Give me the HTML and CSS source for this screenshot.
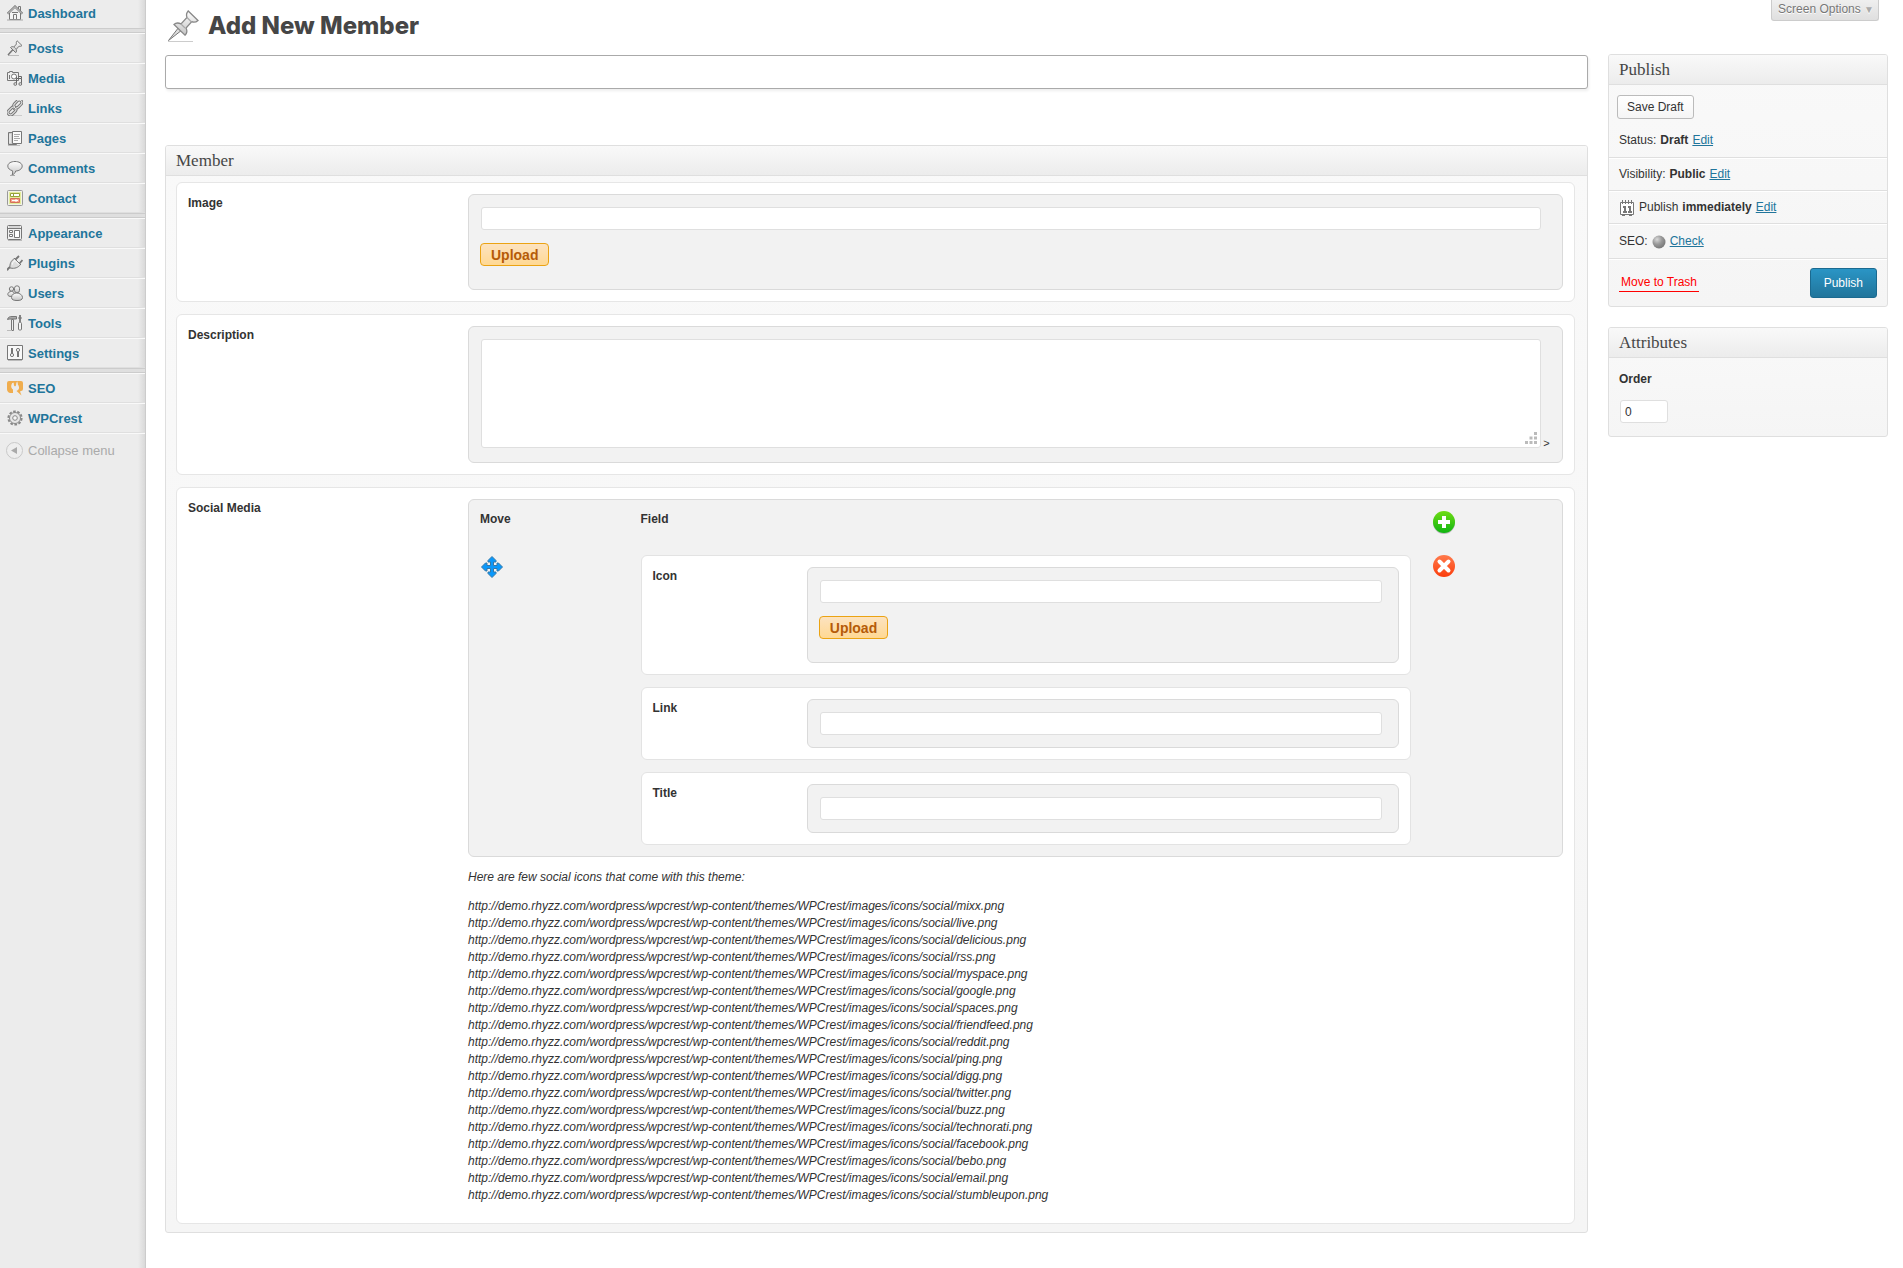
FILE: index.html
```html
<!DOCTYPE html>
<html lang="en">
<head>
  <meta charset="UTF-8" />
  <meta name="viewport" content="width=device-width, initial-scale=1.0" />
  <title>Add New Member</title>
  <link rel="stylesheet" href="styles.css">
</head>
<body>
  <svg class="defs" width="0" height="0" aria-hidden="true">
    <defs>
      <linearGradient id="metal" x1="0" y1="0" x2="0" y2="1">
        <stop offset="0" stop-color="#fff" />
        <stop offset="1" stop-color="#c4c4c4" />
      </linearGradient>
      <linearGradient id="green" x1="0" y1="0" x2="0" y2="1">
        <stop offset="0" stop-color="#6fdc14" />
        <stop offset="1" stop-color="#0fb511" />
      </linearGradient>
      <linearGradient id="orange" x1="0" y1="0" x2="0" y2="1">
        <stop offset="0" stop-color="#ff7a4c" />
        <stop offset="1" stop-color="#fb3d0c" />
      </linearGradient>
      <radialGradient id="ball" cx="0.35" cy="0.3" r="0.75">
        <stop offset="0" stop-color="#d8d8d8" />
        <stop offset="0.5" stop-color="#999" />
        <stop offset="1" stop-color="#757575" />
      </radialGradient>
    </defs>
  </svg>

  <div class="wrap">
    <nav class="menu">
      <ul>
        <li class="first"><a href="#">
          <svg width="16" height="16" viewBox="0 0 16 16" fill="none" stroke="#777"><path d="M2.500 8v6.500h11V8" fill="#f4f4f4" /><path d="M.7 8.700 8 1.500l7.300 7.200" stroke-width="2.200" /><path d="M.9 8.600 8 1.600l7.100 7" stroke="#eee" stroke-width=".8" /><path d="M11.500 4V1.500h2V6" /><path d="M6.500 14.500v-5h3v5M5 7.500h6" /><path d="M0 15h16" stroke="#aaa" /></svg>
          Dashboard</a></li>
        <li class="separator"></li>
        <li><a href="#">
          <svg width="16" height="16" viewBox="0 0 16 16"><path d="M1 15.500h11" stroke="#bbb" /><path d="M1 15 6 9.500" stroke="#777" stroke-width="1.500" /><path d="M3.500 7.500c1-1 2-1 3.300-.5l2.700-3c-.4-1-.3-2.200.6-3.200L15 5.500c-1 .9-2.100 1-3 .7L9.300 9.300c.5 1.200.3 2.600-.6 3.400z" fill="url(#metal)" stroke="#777" /><path d="M7 7l2 2" stroke="#999" /></svg>
          Posts</a></li>
        <li><a href="#">
          <svg width="16" height="16" viewBox="0 0 16 16" fill="none" stroke="#777"><path d="M.5 2.500h2v-1h3v1h6v8H.5z" fill="#eee" /><circle cx="7" cy="6.500" r="2.500" fill="#fff" /><path d="M2.500 5v4" /><path d="M9.500 14v-5.500h5V14M9.500 8.500v-2M14.500 8.500v-2h-3" stroke="#666" /><circle cx="8.300" cy="14" r="1.400" fill="#ddd" /><circle cx="13.300" cy="14" r="1.400" fill="#ddd" /></svg>
          Media</a></li>
        <li><a href="#">
          <svg width="16" height="16" viewBox="0 0 16 16" fill="none"><path d="M3 15.500h12" stroke="#ccc" /><g stroke="#777" stroke-width="3"><rect x="7.500" y="-.5" width="5" height="9" rx="2.500" transform="rotate(45 10.500 5)" /><rect x="2.500" y="6.500" width="5" height="9" rx="2.500" transform="rotate(45 5 11)" /></g><g stroke="#e8e8e8" stroke-width="1"><rect x="7.500" y="-.5" width="5" height="9" rx="2.500" transform="rotate(45 10.500 5)" /><rect x="2.500" y="6.500" width="5" height="9" rx="2.500" transform="rotate(45 5 11)" /></g><path d="M6 10l4-4" stroke="#888" /></svg>
          Links</a></li>
        <li><a href="#">
          <svg width="16" height="16" viewBox="0 0 16 16" fill="none" stroke="#777"><path d="M1.500 2.500h8v12h-8z" fill="#ccc" /><path d="M3 4v9" stroke="#fff" /><path d="M5.500 1.500h9v12h-9z" fill="#fafafa" /><path d="M7 4.500h6M7 6.500h5M7 8.500h6M7 10.500h4" stroke="#aaa" /><path d="M1 15.500h12" stroke="#bbb" /></svg>
          Pages</a></li>
        <li><a href="#">
          <svg width="16" height="16" viewBox="0 0 16 16"><path d="M8 1.500c4 0 7.200 1.800 7.200 4.600S12 11 8.700 11c-.5 2-1.900 3.500-3.700 4 .7-1.300.8-2.700.4-4.300C2.800 10 .8 8.400.8 6.100.8 3.300 4 1.500 8 1.500z" fill="url(#metal)" stroke="#777" /><path d="M3 15.500h5" stroke="#aaa" /></svg>
          Comments</a></li>
        <li><a href="#">
          <svg width="16" height="16" viewBox="0 0 16 16" fill="none"><rect x=".5" y=".5" width="15" height="15" rx="1" fill="#f2f2e6" stroke="#999" /><path d="M2 2h12v12H2z" fill="#e3ec9a" /><path d="M3.500 3.500h9v3h-9z" fill="#fff" stroke="#97a33a" /><path d="M6.500 3v4" stroke="#97a33a" /><path d="M3.500 8.500h9v4h-9z" fill="#f4a08a" stroke="#d4705a" /><path d="M5 10.500h6M9 9v3" stroke="#fff" /></svg>
          Contact</a></li>
        <li class="separator"></li>
        <li><a href="#">
          <svg width="16" height="16" viewBox="0 0 16 16" fill="none" stroke="#777"><rect x=".5" y=".5" width="14" height="14" rx="1" fill="#f0f0f0" /><path d="M1 3.500h13" /><path d="M2 2h11" stroke="#bbb" /><path d="M2.500 5.500h3v2h-3zM2.500 9.500h3v2h-3zM7.500 5.500h5v7h-5z" fill="#fff" /><path d="M1 15.500h14" stroke="#bbb" /></svg>
          Appearance</a></li>
        <li><a href="#">
          <svg width="16" height="16" viewBox="0 0 16 16" fill="none" stroke="#777"><path d="M0 15.500C1 13 2 12.500 3.500 12" stroke-width="2" /><path d="M3 12.800C2.500 9 4 5.500 7.500 3.500l6 6C11.500 12.500 7.500 14 3.500 13z" fill="#ddd" /><path d="M5.500 9.500c0-2 1-3 2.500-4l4 4" stroke="#fff" /><path d="M8.500 4.500 12 1M12.500 8.500 15.500 5" stroke-width="1.800" /><path d="M7 3l7 7" /></svg>
          Plugins</a></li>
        <li><a href="#">
          <svg width="16" height="16" viewBox="0 0 16 16" stroke="#777" fill="url(#metal)"><circle cx="4.500" cy="4" r="2.200" /><path d="M.8 9.500C.8 7.500 2.500 6.500 4.500 6.500S8 8 8 9.500s-1.500 2-3.500 2-3.700-.5-3.700-2z" /><rect x="7.500" y=".8" width="5" height="7" rx="2.500" /><path d="M4.500 12.500c0-3 2.500-4.500 5.300-4.500s5.700 2 5.700 4.500-2.500 3-5.500 3-5.500-.7-5.500-3z" /></svg>
          Users</a></li>
        <li><a href="#">
          <svg width="16" height="16" viewBox="0 0 16 16" fill="none" stroke="#777"><path d="M.5 4.500C1 2 3 1.500 5 1.500h4.500v2.500H4C2.500 4 1.500 4 .5 4.500z" fill="#aaa" /><path d="M4.500 4.500h2v11h-2z" fill="#eee" /><path d="M13 0v7" stroke-width="1.800" /><path d="M11 3h4" /><rect x="11.500" y="7.500" width="3" height="7.500" rx="1" fill="#f4f4f4" /><path d="M0 15.500h5" stroke="#bbb" /></svg>
          Tools</a></li>
        <li><a href="#">
          <svg width="16" height="16" viewBox="0 0 16 16" fill="none" stroke="#777"><path d="M.5.500h15v14H.5z" fill="#f8f8f8" /><path d="M5 3v5M11 7v5" stroke-width="2" /><circle cx="5" cy="10" r="1.600" /><circle cx="11" cy="5" r="1.600" /><path d="M1 15.500h14" stroke="#bbb" /></svg>
          Settings</a></li>
        <li class="separator"></li>
        <li><a href="#">
          <svg width="16" height="16" viewBox="0 0 16 16" fill="#f0ad4e"><path d="M2 1h12q2 0 2 2v6q0 2-2 2l-1 .5 1.500 4L9.500 11l1.500-1c1.500-1 1.500-4-.5-6V1.500L9 2.500v3l-1 1-1-1v-3L5.500 3C3.500 5 4 8.500 6 9.500V13H3Q0 12 0 9V3q0-2 2-2z" /><path d="M6.500 1v3.500h3V1z" /><path d="M6 3v2M10 3v2" stroke="#ececec" /></svg>
          SEO</a></li>
        <li><a href="#">
          <svg width="16" height="16" viewBox="0 0 16 16" fill="none" stroke="#888"><circle cx="8" cy="8" r="6.600" stroke-width="2" stroke-dasharray="2.600 1.550" /><circle cx="8" cy="8" r="5.500" fill="#e6e6e6" /><circle cx="8" cy="8" r="2.300" fill="#f6f6f6" /></svg>
          WPCrest</a></li>
        <li class="collapse"><button type="button">
          <svg width="17" height="17" viewBox="0 0 17 17"><circle cx="8.500" cy="8.500" r="8" fill="#eee" stroke="#c8c8c8" /><path d="M11 5v7L5 8.500z" fill="#aaa" /></svg>
          Collapse menu</button></li>
      </ul>
    </nav>

    <form class="page" onsubmit="return false">
      <button type="button" class="screen-options">Screen Options <span>▼</span></button>
      <header class="heading">
        <svg width="32" height="32" viewBox="0 0 32 32"><path d="M1 31.500h25" stroke="#ccc" /><path d="M1.500 30.500 12 17l3 3z" fill="#ddd" stroke="#777" /><path d="M7 14.500c2-2 5-1.600 7-.6l6-6.500c-.8-2-.6-4.400 1.200-6.400l9.800 9.500c-2 1.800-4.400 2-6.400 1.200l-5.600 6.300c1.200 2.400 1 5.400-1 7.200z" fill="url(#metal)" stroke="#888" stroke-width="1.300" /><path d="M14 14l4 4M20 7.500l4.500 4.500" stroke="#aaa" stroke-width="1.200" /></svg>
        <h1>Add New Member</h1>
      </header>

      <div class="columns">
        <main class="main">
          <input type="text" class="post-title" aria-label="Title">

          <section class="postbox member">
            <h3>Member</h3>
            <div class="fields">
              <div class="field">
                <label for="image">Image</label>
                <div class="box">
                  <input type="text" id="image">
                  <button type="button" class="upload">Upload</button>
                </div>
              </div>

              <div class="field">
                <label for="description">Description</label>
                <div class="box area">
                  <textarea id="description"></textarea>
                  <span>&gt;</span>
                </div>
              </div>

              <div class="field">
                <strong class="name">Social Media</strong>
                <div>
                  <div class="box repeater">
                    <strong>Move</strong>
                    <strong>Field</strong>
                    <button type="button" class="icon-btn action" aria-label="Add">
                      <svg width="22" height="23" viewBox="0 0 22 23"><circle cx="11" cy="12" r="11" fill="#bbb" /><circle cx="11" cy="11" r="11" fill="url(#green)" /><path d="M9 5h4v4h4v4h-4v4H9v-4H5V9h4z" fill="#fff" /></svg>
                    </button>

                    <span class="icon-btn move">
                      <svg width="22" height="22" viewBox="0 0 22 22"><path d="M11 .5 15 4.500V6h-2.500v3.500H16V7h1.500l4 4-4 4H16v-2.500h-3.500V16H15v1.500l-4 4-4-4V16h2.500v-3.500H6V15H4.500l-4-4 4-4H6v2.500h3.500V6H7V4.500z" fill="#0a98fb" stroke="#3578a8" /></svg>
                    </span>
                    <div class="fields">
                      <div class="field">
                        <label for="icon">Icon</label>
                        <div class="box">
                          <input type="text" id="icon">
                          <button type="button" class="upload">Upload</button>
                        </div>
                      </div>
                      <div class="field">
                        <label for="link">Link</label>
                        <div class="box"><input type="text" id="link"></div>
                      </div>
                      <div class="field">
                        <label for="title">Title</label>
                        <div class="box"><input type="text" id="title"></div>
                      </div>
                    </div>
                    <button type="button" class="icon-btn action" aria-label="Remove">
                      <svg width="22" height="22" viewBox="0 0 22 22"><circle cx="11" cy="11" r="11" fill="url(#orange)" /><path d="M6.500 6.500l9 9M15.500 6.500l-9 9" stroke="#fff" stroke-width="4" stroke-linecap="round" /></svg>
                    </button>
                  </div>

                  <div class="help">
                    <p>Here are few social icons that come with this theme:</p>
                    <p>
                      http://demo.rhyzz.com/wordpress/wpcrest/wp-content/themes/WPCrest/images/icons/social/mixx.png<br>
                      http://demo.rhyzz.com/wordpress/wpcrest/wp-content/themes/WPCrest/images/icons/social/live.png<br>
                      http://demo.rhyzz.com/wordpress/wpcrest/wp-content/themes/WPCrest/images/icons/social/delicious.png<br>
                      http://demo.rhyzz.com/wordpress/wpcrest/wp-content/themes/WPCrest/images/icons/social/rss.png<br>
                      http://demo.rhyzz.com/wordpress/wpcrest/wp-content/themes/WPCrest/images/icons/social/myspace.png<br>
                      http://demo.rhyzz.com/wordpress/wpcrest/wp-content/themes/WPCrest/images/icons/social/google.png<br>
                      http://demo.rhyzz.com/wordpress/wpcrest/wp-content/themes/WPCrest/images/icons/social/spaces.png<br>
                      http://demo.rhyzz.com/wordpress/wpcrest/wp-content/themes/WPCrest/images/icons/social/friendfeed.png<br>
                      http://demo.rhyzz.com/wordpress/wpcrest/wp-content/themes/WPCrest/images/icons/social/reddit.png<br>
                      http://demo.rhyzz.com/wordpress/wpcrest/wp-content/themes/WPCrest/images/icons/social/ping.png<br>
                      http://demo.rhyzz.com/wordpress/wpcrest/wp-content/themes/WPCrest/images/icons/social/digg.png<br>
                      http://demo.rhyzz.com/wordpress/wpcrest/wp-content/themes/WPCrest/images/icons/social/twitter.png<br>
                      http://demo.rhyzz.com/wordpress/wpcrest/wp-content/themes/WPCrest/images/icons/social/buzz.png<br>
                      http://demo.rhyzz.com/wordpress/wpcrest/wp-content/themes/WPCrest/images/icons/social/technorati.png<br>
                      http://demo.rhyzz.com/wordpress/wpcrest/wp-content/themes/WPCrest/images/icons/social/facebook.png<br>
                      http://demo.rhyzz.com/wordpress/wpcrest/wp-content/themes/WPCrest/images/icons/social/bebo.png<br>
                      http://demo.rhyzz.com/wordpress/wpcrest/wp-content/themes/WPCrest/images/icons/social/email.png<br>
                      http://demo.rhyzz.com/wordpress/wpcrest/wp-content/themes/WPCrest/images/icons/social/stumbleupon.png
                    </p>
                  </div>
                </div>
              </div>
            </div>
          </section>
        </main>

        <aside class="side">
          <section class="postbox">
            <h3>Publish</h3>
            <div class="save-row"><button type="button" class="button">Save Draft</button></div>
            <div class="misc status">Status: <b>Draft</b> <a href="#">Edit</a></div>
            <div class="misc">Visibility: <b>Public</b> <a href="#">Edit</a></div>
            <div class="misc">
              <svg width="16" height="16" viewBox="0 0 16 16" fill="none" stroke="#777"><path d="M1.500 2.500h13v12h-13z" fill="#fff" /><path d="M3.500 0v4M6.500 0v4M9.500 0v4M12.500 0v4" /><path d="M4 7h2v5M4 12h4M9 7h2v5M9 12h4" stroke-width="2" /><path d="M3 15.500h3M10 15.500h3" /></svg>
              Publish <b>immediately</b> <a href="#">Edit</a>
            </div>
            <div class="misc seo">SEO:
              <svg width="14" height="14" viewBox="0 0 14 14"><circle cx="7" cy="7" r="6.500" fill="url(#ball)" /></svg>
              <a href="#">Check</a>
            </div>
            <div class="publish-row">
              <a href="#" class="trash">Move to Trash</a>
              <button type="submit" class="button-primary">Publish</button>
            </div>
          </section>

          <section class="postbox">
            <h3>Attributes</h3>
            <div class="attributes">
              <label for="order">Order</label>
              <input type="text" id="order" value="0">
            </div>
          </section>
        </aside>
      </div>
    </form>
  </div>
</body>
</html>
```
FILE: styles.css
```css
body {
  margin: 0;
  font-family: "Liberation Sans", Arial, sans-serif;
  font-size: 12px;
  line-height: 17px;
  color: #333;
  background: white;
}
button,
input,
textarea {
  font-family: inherit;
  font-size: 12px;
}
button {
  cursor: pointer;
}
a {
  color: #21759b;
}
.defs {
  position: absolute;
}
.wrap {
  display: flex;
  min-height: 100vh;
}

/* left menu */
.menu {
  flex: none;
  width: 145px;
  border-right: 1px solid #ccc;
  background: linear-gradient(to left, #d9d9d9, #ececec 7px);
}
.menu ul {
  margin: 0;
  padding: 0;
  list-style: none;
}
.menu li {
  box-sizing: border-box;
  height: 30px;
  border-top: 1px solid #f9f9f9;
  border-bottom: 1px solid #dfdfdf;
}
.menu .first {
  height: 28px;
  border: none;
}
.menu .separator {
  height: 5px;
  border-color: #ccc;
  background: #dfdfdf;
}
.menu a {
  display: flex;
  align-items: center;
  gap: 5px;
  height: 28px;
  padding-left: 7px;
  font-size: 13px;
  font-weight: bold;
  text-decoration: none;
}
.menu .first a {
  height: 26px;
}
.menu .collapse {
  height: 36px;
  border-bottom: none;
}
.collapse button {
  display: flex;
  align-items: center;
  gap: 5px;
  height: 33px;
  padding: 0 0 0 6px;
  border: none;
  background: none;
  font-size: 13px;
  color: #aaa;
}

/* page */
.page {
  position: relative;
  flex: 1;
  min-width: 0;
  padding: 0 15px 35px 19px;
}
.screen-options {
  position: absolute;
  top: 0;
  right: 24px;
  height: 21px;
  padding: 0 4px 3px 6px;
  border: 1px solid #ccc;
  border-top: none;
  border-radius: 0 0 3px 3px;
  background: linear-gradient(#efefef, #dfdfdf);
  color: #777;
  text-shadow: 0 1px 0 white;
}
.screen-options span {
  font-size: 10px;
  color: #aaa;
}
.heading {
  display: flex;
  align-items: center;
  gap: 9px;
  height: 44px;
  padding: 0 0 0 2px;
}
.heading svg {
  margin-top: 8px;
}
.heading h1 {
  margin: 8px 0 0;
  font-family: Inter, "Liberation Sans", sans-serif;
  font-size: 24px;
  font-weight: 800;
  line-height: 28px;
  color: #464646;
}
.columns {
  display: flex;
  align-items: flex-start;
  gap: 20px;
  padding-top: 10px;
}
.main {
  flex: 1;
  min-width: 0;
}
.side {
  flex: none;
  width: 280px;
}
.post-title {
  box-sizing: border-box;
  display: block;
  width: 100%;
  height: 34px;
  margin: 1px 0 56px;
  padding: 3px 8px;
  border: 1px solid #aaa;
  border-radius: 3px;
  box-shadow: 1px 2px 3px #eee;
  font-size: 20px;
}
.postbox {
  border: 1px solid #dfdfdf;
  border-radius: 3px;
  background: linear-gradient(#f9f9f9, #f5f5f5);
}
.postbox h3 {
  margin: 0;
  padding: 0 10px;
  border-bottom: 1px solid #dfdfdf;
  border-radius: 2px 2px 0 0;
  background: linear-gradient(#f9f9f9, #ececec);
  font-family: "Liberation Serif", serif;
  font-size: 17px;
  font-weight: normal;
  line-height: 29px;
  color: #464646;
}

/* fields */
.member > .fields {
  padding: 6px 12px 8px 10px;
}
.fields {
  display: flex;
  flex-direction: column;
  gap: 12px;
}
.field {
  display: grid;
  grid-template-columns: 20% minmax(0, 1fr);
  gap: 5px;
  padding: 11px;
  border: 1px solid #e6e6e6;
  border-radius: 6px;
  background: white;
}
.field label,
.field .name {
  padding-top: 1px;
  font-weight: bold;
}
.box {
  padding: 12px;
  border: 1px solid #dadada;
  border-radius: 6px;
  background: #f2f2f2;
}
.box input,
.box textarea,
.attributes input {
  display: block;
  width: 99%;
  height: 21px;
  margin: 0;
  padding: 0;
  border: 1px solid #dfdfdf;
  border-radius: 3px;
  background: white;
  color: #333;
}
.upload {
  display: block;
  height: 23px;
  margin: 13px 0 11px -1px;
  padding: 0 10px;
  border: 1px solid #eba313;
  border-radius: 4px;
  background: linear-gradient(#fce3c0, #ffd893);
  font-size: 14px;
  font-weight: bold;
  line-height: 20px;
  color: #b55b08;
}
.area {
  display: flex;
  align-items: flex-end;
  gap: 2px;
  padding-bottom: 14px;
}
.area textarea {
  height: 107px;
}
.area span {
  font-size: 11px;
  line-height: 10px;
}
.area textarea::-webkit-resizer {
  background: url("data:image/svg+xml,%3Csvg xmlns='http://www.w3.org/2000/svg' width='15' height='15' fill='%23bbb'%3E%3Cpath d='M9 0h3v3H9zM4.500 4.500h3v3h-3zM9 4.500h3v3H9zM0 9h3v3H0zM4.500 9h3v3h-3zM9 9h3v3H9z'/%3E%3C/svg%3E") no-repeat;
}
.repeater {
  display: grid;
  grid-template-columns: 15% 72% 1fr;
  row-gap: 21px;
  padding: 11px 12px 11px 11px;
}
.icon-btn {
  display: block;
  justify-self: start;
  align-self: start;
  padding: 0;
  border: none;
  background: none;
  line-height: 0;
}
.move {
  padding: 1px;
}
.action {
  margin-left: 22px;
}
.repeater .fields .field {
  border-color: #e3e3e3;
}
.help {
  padding-bottom: 8px;
  font-style: italic;
}
.help p {
  margin: 12px 0 0;
}

/* right column */
.side .postbox {
  margin-bottom: 20px;
}
.save-row {
  padding: 10px 8px 5px;
}
.button {
  display: block;
  height: 24px;
  padding: 0 9px;
  border: 1px solid #bbb;
  border-radius: 3px;
  background: linear-gradient(white, #f5f5f5);
  color: #333;
}
.misc {
  display: flex;
  align-items: center;
  gap: 4px;
  height: 31px;
  padding: 0 10px;
  border-top: 1px solid #fff;
  border-bottom: 1px solid #dfdfdf;
}
.status {
  height: 33px;
  border-top: none;
}
.seo {
  height: 33px;
}
.publish-row {
  display: flex;
  align-items: center;
  justify-content: space-between;
  padding: 8px 10px;
  border-top: 1px solid #fff;
}
.trash {
  padding: 0 2px;
  border-bottom: 1px solid red;
  text-decoration: none;
  color: red;
}
.button-primary {
  height: 30px;
  padding: 0 13px;
  border: 1px solid #1b6a90;
  border-radius: 3px;
  background: linear-gradient(#2a95c5, #21759b);
  color: white;
}
.attributes {
  padding: 13px 10px;
}
.attributes label {
  font-weight: bold;
}
.attributes input {
  width: 42px;
  margin: 12px 0 0 1px;
  padding-left: 4px;
}
```
